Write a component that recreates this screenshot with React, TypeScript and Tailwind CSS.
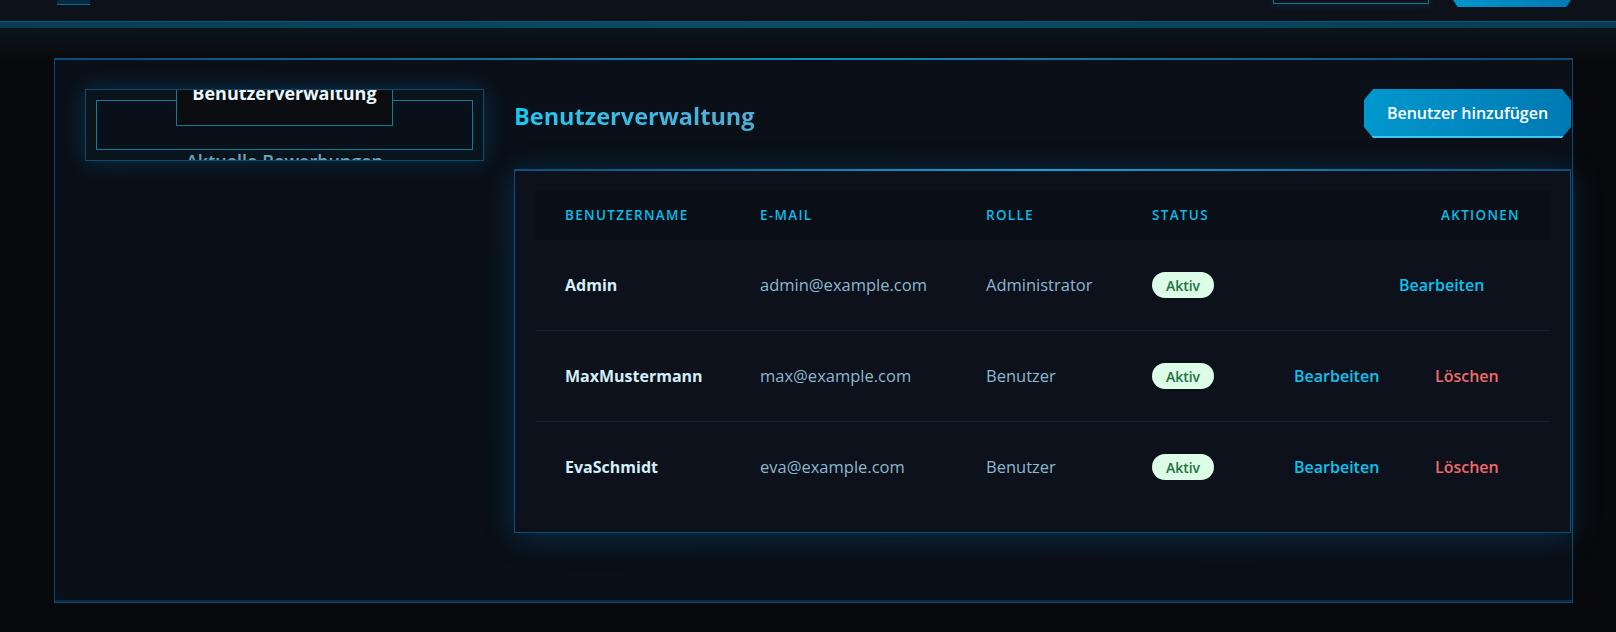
import type { ReactNode } from "react";

type User = {
	name: string;
	email: string;
	role: string;
	canDelete: boolean;
};

const users: User[] = [
	{ name: "Admin", email: "admin@example.com", role: "Administrator", canDelete: false },
	{ name: "MaxMustermann", email: "max@example.com", role: "Benutzer", canDelete: true },
	{ name: "EvaSchmidt", email: "eva@example.com", role: "Benutzer", canDelete: true },
];

const rowGrid = "grid grid-cols-[195px_226px_166px_120px_1fr] items-center px-[30px]";

const HeadCell = ({ children, right }: { children: ReactNode; right?: boolean }) => (
	<div
		className={
			right
				? "text-right text-[13.5px] font-semibold uppercase tracking-[1.3px] text-[#0bbbe6]"
				: "text-[13.5px] font-semibold uppercase tracking-[1.3px] text-[#0bbbe6]"
		}
	>
		{children}
	</div>
);

const Sidebar = () => (
	<aside className="w-[399px] shrink-0">
		<div className="relative h-[72px] overflow-hidden border border-[#0c4d78] bg-[#09141d] shadow-[0_0_22px_rgba(14,165,233,0.22)]">
			{/* inner frame */}
			<div className="absolute inset-[10px] border border-[#117a98] bg-[#08111a]" />
			<nav className="relative -mt-[30px] flex flex-col items-center gap-[2px]">
				<a className="border border-[#117a98] bg-[#0a0c10] px-[15px] py-[20px] text-[18px] leading-[24px] font-bold text-[#e8f7fd]">
					Benutzerverwaltung
				</a>
				<a className="border border-transparent px-[15px] py-[20px] text-[18px] leading-[24px] font-semibold text-[#6aa6c2]">
					Aktuelle Bewerbungen
				</a>
			</nav>
		</div>
	</aside>
);

const UserTable = () => (
	<div className="relative border border-[#0b4f7f] bg-[#0c111b] p-[20px] shadow-[0_4px_30px_rgba(14,165,233,0.22)]">
		<div className="absolute inset-x-0 -top-px h-[2px] bg-linear-to-r from-[#0b4f7f] via-[#0ea5d8] to-[#0b4f7f]" />
		<div className={`${rowGrid} h-[50px] bg-[#0a0f17]`}>
			<HeadCell>Benutzername</HeadCell>
			<HeadCell>E-Mail</HeadCell>
			<HeadCell>Rolle</HeadCell>
			<HeadCell>Status</HeadCell>
			<HeadCell right>Aktionen</HeadCell>
		</div>
		{users.map((u, i) => (
			<div
				key={u.name}
				className={
					i < users.length - 1
						? `${rowGrid} h-[91px] border-b border-[#10223a]`
						: `${rowGrid} h-[90px]`
				}
			>
				<div className="text-[16px] font-bold text-[#d3eff9]">{u.name}</div>
				<div className="text-[16.5px] text-[#8cb8cf]">{u.email}</div>
				<div className="text-[16.5px] text-[#8cb8cf]">{u.role}</div>
				<div>
					<span className="inline-flex h-[26px] w-[62px] items-center justify-center rounded-full bg-[#dcfce7] text-[14px] font-semibold text-[#24703f]">
						Aktiv
					</span>
				</div>
				<div className="flex items-center">
					{u.canDelete ? (
						<>
							<button className="ml-[22px] w-[141px] text-left text-[16px] font-semibold text-[#0cc3ef]">
								Bearbeiten
							</button>
							<button className="text-left text-[16px] font-semibold text-[#ef6a6a]">Löschen</button>
						</>
					) : (
						<button className="ml-[127px] text-left text-[16px] font-semibold text-[#0cc3ef]">
							Bearbeiten
						</button>
					)}
				</div>
			</div>
		))}
	</div>
);

export default function App() {
	return (
		<div className="min-h-screen bg-[#08090d] font-['Open_Sans',sans-serif]">
			<header className="flex h-[21px] items-start bg-[#0d1119] pl-[57px] pr-[45px]">
				<div className="h-[5px] w-[33px] border-b border-[#0a6a90] bg-[#072a40]" />
				<div className="flex-1" />
				<div className="h-[4px] w-[156px] border-x border-b border-[#0b7a9a] shadow-[0_0_10px_rgba(14,165,233,0.3)]" />
				<div className="ml-[24px] h-[7px] w-[118px] bg-linear-to-r from-[#0096cc] to-[#0079b3] [clip-path:polygon(0_0,100%_0,96%_100%,4%_100%)]" />
			</header>
			<div className="h-px bg-[#0a5676]" />
			<div className="h-[6px] bg-linear-to-r from-[#063c53] via-[#084d68] to-[#063c53]" />
			<main className="bg-[linear-gradient(to_bottom,#0b151c,#08090d_32px)] pl-[54px] pt-[30px]">
				<section className="relative flex h-[545px] w-[1519px] border border-[#0b4a78] bg-linear-to-br from-[#0a1019] to-[#0a0e17] pl-[30px] pt-[30px] shadow-[inset_0_-2px_0_rgba(11,74,120,0.5)]">
					<div className="absolute inset-x-0 -top-px h-[2px] bg-linear-to-r from-[#0b4a78] via-[#0c8fbf] to-[#0b4a78]" />
					<Sidebar />
					<div className="ml-[30px] w-[1057px]">
						<div className="flex h-[49px] items-center justify-between">
							<h1 className="mt-[7px] bg-linear-to-r from-[#12c9f3] to-[#52acd4] bg-clip-text text-[23.5px] font-bold text-transparent">
								Benutzerverwaltung
							</h1>
							<button className="h-[49px] w-[207px] border-b-2 border-[#3cc6f0] bg-linear-to-r from-[#0098cd] to-[#0079b2] text-[16px] font-semibold text-white [clip-path:polygon(9px_0,calc(100%-9px)_0,100%_11px,100%_calc(100%-11px),calc(100%-9px)_100%,9px_100%,0_calc(100%-11px),0_11px)]">
								Benutzer hinzufügen
							</button>
						</div>
						<div className="mt-[31px]">
							<UserTable />
						</div>
					</div>
				</section>
			</main>
		</div>
	);
}
